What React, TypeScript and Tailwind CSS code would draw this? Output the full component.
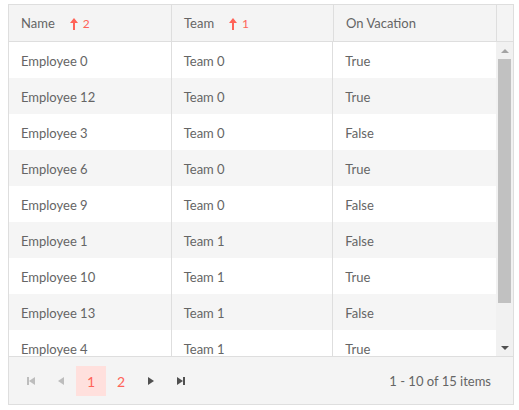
import { useState } from 'react'

const rows = [
  ['Employee 0', 'Team 0', 'True'],
  ['Employee 12', 'Team 0', 'True'],
  ['Employee 3', 'Team 0', 'False'],
  ['Employee 6', 'Team 0', 'True'],
  ['Employee 9', 'Team 0', 'False'],
  ['Employee 1', 'Team 1', 'False'],
  ['Employee 10', 'Team 1', 'True'],
  ['Employee 13', 'Team 1', 'False'],
  ['Employee 4', 'Team 1', 'True'],
]

function SortArrow({ order }: { order: number }) {
  return (
    <span className="ml-[15px] inline-flex items-center gap-[5px] text-[#ff6358]">
      <svg width="8" height="12" viewBox="0 0 8 12" fill="currentColor">
        <path d="M4 0 L8 5 L5 5 L5 12 L3 12 L3 5 L0 5 Z" />
      </svg>
      <span className="text-[12px]">{order}</span>
    </span>
  )
}

function Tri({ dir }: { dir: 'left' | 'right' }) {
  return (
    <svg width="6" height="8" viewBox="0 0 6 8" fill="currentColor">
      {dir === 'left' ? <path d="M6 0 L0 4 L6 8 Z" /> : <path d="M0 0 L6 4 L0 8 Z" />}
    </svg>
  )
}

export default function App() {
  const [page, setPage] = useState(1)

  return (
    <div className="w-[519px] h-[410px] bg-white pl-2 pr-[5px] pt-1 pb-[5px] font-['Lato',sans-serif] text-[13px] text-[#656565]">
      <div className="flex h-full flex-col border border-[#dedede]">
        {/* header */}
        <div className="flex h-[37px] flex-shrink-0 border-b border-[#dedede] bg-[#f4f4f4]">
          <div className="flex w-[163px] items-center border-r border-[#dedede] px-3 pt-[2px]">
            Name <SortArrow order={2} />
          </div>
          <div className="flex w-[162px] items-center border-r border-[#dedede] px-3 pt-[2px]">
            Team <SortArrow order={1} />
          </div>
          <div className="flex w-[163px] items-center border-r border-[#dedede] px-3 pt-[2px]">On Vacation</div>
          <div className="flex-1" />
        </div>

        {/* body */}
        <div className="flex min-h-0 flex-1 overflow-hidden">
          <div className="w-[488px] overflow-hidden">
            {rows.map((r, i) => (
              <div key={i} className={`flex h-9 ${i % 2 === 1 ? 'bg-[#f5f5f5]' : 'bg-white'}`}>
                <div className="flex w-[163px] items-center border-r border-[#dedede] px-3 pt-[3px]">{r[0]}</div>
                <div className="flex w-[162px] items-center border-r border-[#dedede] px-3 pt-[3px]">{r[1]}</div>
                <div className="flex w-[163px] items-center px-3 pt-[3px]">{r[2]}</div>
              </div>
            ))}
          </div>
          <div className="flex w-[17px] flex-col bg-[#f1f1f1]">
            <div className="flex h-[17px] items-center justify-center text-[#a3a3a3]">
              <svg width="8" height="4" viewBox="0 0 8 4" fill="currentColor"><path d="M0 4 L4 0 L8 4 Z" /></svg>
            </div>
            <div className="mx-[2px] h-[244px] bg-[#c1c1c1]" />
            <div className="flex-1" />
            <div className="flex h-[17px] items-center justify-center text-[#505050]">
              <svg width="8" height="4" viewBox="0 0 8 4" fill="currentColor"><path d="M0 0 L8 0 L4 4 Z" /></svg>
            </div>
          </div>
        </div>

        {/* pager */}
        <div className="flex h-[48px] flex-shrink-0 items-center border-t border-[#dedede] bg-[#f4f4f4] pl-[7px] pr-[22px]">
          <div className="flex items-center">
            <button className="flex h-[30px] w-[30px] items-center justify-center text-[#bdbdbd]">
              <span className="flex items-center">
                <span className="h-2 w-[2px] bg-current" />
                <Tri dir="left" />
              </span>
            </button>
            <button className="flex h-[30px] w-[30px] items-center justify-center text-[#bdbdbd]">
              <Tri dir="left" />
            </button>
            <button
              onClick={() => setPage(1)}
              className={`flex h-[30px] w-[30px] items-center justify-center pt-[2px] text-[14px] text-[#ff6358] ${page === 1 ? 'bg-[#ffe0dd]' : ''}`}
            >
              1
            </button>
            <button
              onClick={() => setPage(2)}
              className={`flex h-[30px] w-[30px] items-center justify-center pt-[2px] text-[14px] text-[#ff6358] ${page === 2 ? 'bg-[#ffe0dd]' : ''}`}
            >
              2
            </button>
            <button className="flex h-[30px] w-[30px] items-center justify-center text-[#505050]">
              <Tri dir="right" />
            </button>
            <button className="flex h-[30px] w-[30px] items-center justify-center text-[#505050]">
              <span className="flex items-center">
                <Tri dir="right" />
                <span className="h-2 w-[2px] bg-current" />
              </span>
            </button>
          </div>
          <div className="ml-auto pt-[2px]">1 - 10 of 15 items</div>
        </div>
      </div>
    </div>
  )
}
